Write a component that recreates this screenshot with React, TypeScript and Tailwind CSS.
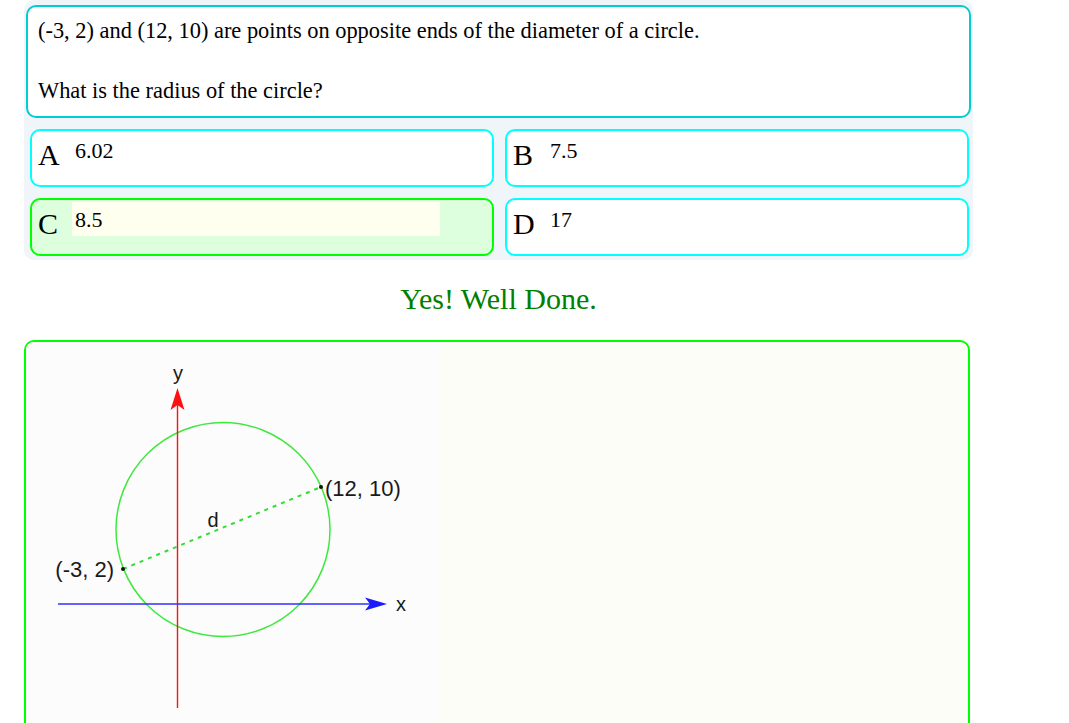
import React from "react";

const serif = { fontFamily: '"Liberation Serif", "Times New Roman", serif' };

function Option({
  letter,
  value,
  correct,
}: {
  letter: string;
  value: string;
  correct?: boolean;
}) {
  return (
    <div
      className={
        "flex items-start h-[58px] border-2 rounded-[10px] " +
        (correct ? "border-[#00ff00] bg-[#ddffdd]" : "border-[#00ffff] bg-white")
      }
    >
      <div className="w-[40px] pl-[6px] mt-[7px] text-[30px] leading-[34px] text-black">
        {letter}
      </div>
      <div
        className={
          "mt-[2px] w-[368px] px-[3px] pt-[5px] pb-[4px] text-[22px] leading-[25px] text-black " +
          (correct ? "bg-[#fffff0]" : "")
        }
      >
        {value}
      </div>
    </div>
  );
}

function Graph() {
  const labelFont = '"Liberation Sans", Arial, sans-serif';
  return (
    <svg width="414" height="400" viewBox="0 0 414 400" className="block">
      <rect x="0" y="0" width="414" height="400" fill="#fcfcfc" />
      {/* circle */}
      <circle cx="197" cy="187.5" r="107" fill="none" stroke="#3ee83e" strokeWidth="1.5" />
      {/* y axis */}
      <line x1="151.5" y1="60" x2="151.5" y2="366" stroke="#ff1010" strokeWidth="1.4" />
      <path d="M151.5 46 L158.5 68 L151.5 63 L144.5 68 Z" fill="#ff1010" />
      <text x="152" y="38" textAnchor="middle" fontSize="20" fontFamily={labelFont} fill="#1a1a1a">
        y
      </text>
      {/* x axis */}
      <line x1="32" y1="262" x2="350" y2="262" stroke="#3030ff" strokeWidth="1.6" />
      <path d="M361 262 L339 255.5 L344 262 L339 268.5 Z" fill="#1a1aff" />
      <text x="375" y="269" textAnchor="middle" fontSize="20" fontFamily={labelFont} fill="#1a1a1a">
        x
      </text>
      {/* diameter */}
      <line
        x1="97"
        y1="227"
        x2="295"
        y2="145"
        stroke="#33dd33"
        strokeWidth="2"
        strokeDasharray="4 5"
      />
      <circle cx="97" cy="227" r="2" fill="#111" />
      <circle cx="295" cy="145" r="2" fill="#111" />
      <text x="187" y="185" textAnchor="middle" fontSize="20" fontFamily={labelFont} fill="#1a1a1a">
        d
      </text>
      <text x="88" y="235" textAnchor="end" fontSize="22" fontFamily={labelFont} fill="#1a1a1a">
        (-3, 2)
      </text>
      <text x="299" y="154" textAnchor="start" fontSize="22" fontFamily={labelFont} fill="#1a1a1a">
        (12, 10)
      </text>
    </svg>
  );
}

export default function App() {
  return (
    <div className="h-[723px] overflow-hidden bg-white" style={serif}>
      <div className="ml-[24px] w-[949px] bg-[#f0f5fa] rounded-[10px] pt-[5px] pb-[4px]">
        <div className="mx-[2px] h-[113px] border-2 border-[#00cdd0] rounded-[10px] bg-white pl-[10px] pt-[11px] text-[22.4px] leading-[25px] text-black">
          <p>(-3, 2) and (12, 10) are points on opposite ends of the diameter of a circle.</p>
          <p className="mt-[35px]">What is the radius of the circle?</p>
        </div>
        <div className="mt-[11px] grid grid-cols-2 gap-[11px] pl-[6px] pr-[4px]">
          <Option letter="A" value="6.02" />
          <Option letter="B" value="7.5" />
          <Option letter="C" value="8.5" correct />
          <Option letter="D" value="17" />
        </div>
      </div>
      <div className="ml-[24px] w-[949px] mt-[22px] h-[33px] text-center text-[30px] leading-[33px] text-[#008000]">
        Yes! Well Done.
      </div>
      <div className="ml-[24px] mt-[25px] w-[946px] h-[420px] border-2 border-[#00ff00] rounded-[10px] bg-[#fdfdf8] overflow-hidden">
        <Graph />
      </div>
    </div>
  );
}
